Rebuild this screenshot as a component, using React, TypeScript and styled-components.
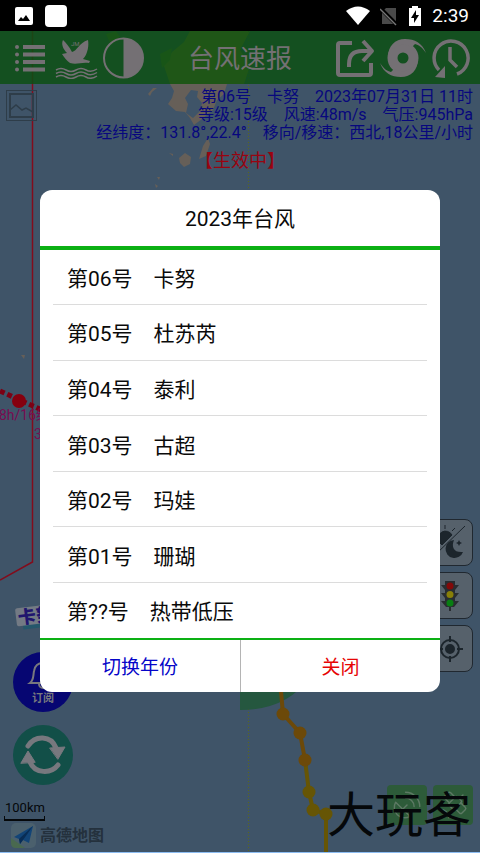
import React from 'react';
import styled, { createGlobalStyle } from 'styled-components';
import { Satellite, SatelliteDish } from 'lucide-react';

const GlobalStyle = createGlobalStyle`
  * { box-sizing: border-box; }
  body { margin: 0; background: #3f5468; font-family: Roboto, "Noto Sans CJK SC", sans-serif; }
  button { font: inherit; color: inherit; border: 0; padding: 0; background: none; cursor: pointer; }
  svg { display: block; }
`;

const Screen = styled.div`
  min-height: 100vh;
  display: flex;
  flex-direction: column;
`;

const StatusBar = styled.div`
  height: 31px;
  padding: 0 11px 0 15px;
  background: #000;
  color: #fff;
  display: flex;
  align-items: center;
  justify-content: space-between;
  font-size: 19px;
  font-weight: 400;
`;

const StatusGroup = styled.div<{ $gap: number }>`
  display: flex;
  align-items: center;
  gap: ${(p) => p.$gap}px;
`;

const AppTile = styled.div`
  width: 22px;
  height: 22px;
  border-radius: 4px;
  background: #fff;
`;

const Stage = styled.main`
  position: relative;
  flex: 1;
  display: flex;
  flex-direction: column;
  overflow: hidden;
  border-bottom: 1px solid #8dbdf2;
`;

const MapCanvas = styled.svg`
  position: absolute;
  inset: 0;
  width: 100%;
  height: 100%;
`;

const Header = styled.header`
  position: relative;
  height: 53px;
  padding: 0 9px;
  background: rgba(13, 79, 20, 0.86);
  color: #747074;
  display: grid;
  grid-template-columns: 1fr auto 1fr;
  align-items: center;
`;

const Title = styled.h1`
  margin: 0;
  padding-top: 2px;
  font-size: 26px;
  line-height: 36px;
  font-weight: 400;
`;

const Tools = styled.div<{ $end?: boolean }>`
  display: flex;
  align-items: center;
  gap: 5px;
  justify-content: ${(p) => (p.$end ? 'flex-end' : 'flex-start')};
`;

const Info = styled.section`
  position: relative;
  padding: 4px 7px 0 40px;
  text-align: right;
  color: #07077e;
  font-size: 16px;
  line-height: 18px;
  p { margin: 0; white-space: pre; }
`;

const Effective = styled.p`
  position: relative;
  margin: 6px 0 0;
  text-align: center;
  color: #980410;
  font-size: 18px;
  line-height: 26px;
`;

const Floating = styled.div<{ $side: 'left' | 'right'; $offset: number; $bottom: number; $gap: number; $row?: boolean }>`
  position: absolute;
  ${(p) => p.$side}: ${(p) => p.$offset}px;
  bottom: ${(p) => p.$bottom}px;
  display: flex;
  flex-direction: ${(p) => (p.$row ? 'row' : 'column')};
  gap: ${(p) => p.$gap}px;
`;

const PictureButton = styled.button`
  position: absolute;
  top: 59px;
  left: 6px;
`;

const RoundButton = styled.button<{ $tone: string }>`
  width: 60px;
  height: 60px;
  border-radius: 50%;
  background: ${(p) => p.$tone};
  color: #77787e;
  display: flex;
  flex-direction: column;
  align-items: center;
  justify-content: center;
  font-size: 11px;
  line-height: 18px;
  font-weight: 700;
`;

const MapButton = styled.button`
  width: 46px;
  height: 47px;
  border: 1px solid #202830;
  border-radius: 8px;
  background: #56616b;
  display: flex;
  align-items: center;
  justify-content: center;
`;

const LayerButton = styled.button`
  width: 40px;
  height: 40px;
  border-radius: 4px;
  background: #2d5b39;
  color: #5d7964;
  display: flex;
  align-items: center;
  justify-content: center;
`;

const Scale = styled.div`
  width: 41px;
  height: 22px;
  border: solid #05080a;
  border-width: 0 1px 2px;
  border-image: linear-gradient(to top, #05080a 4px, transparent 4px) 1;
  color: #05080a;
  font-size: 13px;
  line-height: 18px;
  white-space: nowrap;
`;

const Credit = styled.div`
  display: flex;
  align-items: center;
  gap: 4px;
  color: #24313d;
  font-size: 16px;
  line-height: 24px;
  font-weight: 700;
`;

const Watermark = styled.div`
  position: absolute;
  right: 9px;
  bottom: 12px;
  color: #05080a;
  font-size: 48px;
  line-height: 48px;
  font-weight: 400;
`;

const Overlay = styled.div`
  position: absolute;
  inset: 0;
  padding: 0 40px 2px;
  display: flex;
  align-items: center;
`;

const Dialog = styled.section`
  flex: 1;
  min-height: 502px;
  border-radius: 12px;
  overflow: hidden;
  background: #fff;
  color: #0a0a0a;
  display: flex;
  flex-direction: column;
`;

const DialogTitle = styled.h2`
  margin: 0;
  padding: 14px 0 12px;
  border-bottom: 4px solid #0cb014;
  text-align: center;
  font-size: 21px;
  line-height: 30px;
  font-weight: 400;
`;

const StormList = styled.ul`
  flex: 1;
  margin: 0;
  padding: 0 13px;
  list-style: none;
  display: flex;
  flex-direction: column;
`;

const StormItem = styled.li`
  flex: 1;
  display: flex;
  border-bottom: 1px solid #dcdcdc;
  &:last-child { border-bottom: 0; }
`;

const StormButton = styled.button`
  flex: 1;
  padding: 4px 14px 0;
  text-align: left;
  font-size: 21px;
  line-height: 30px;
`;

const Actions = styled.footer`
  display: grid;
  grid-template-columns: 1fr 1fr;
  border-top: 2px solid #0cb014;
`;

const ActionButton = styled.button<{ $tone: string }>`
  padding: 14px 0 10px;
  color: ${(p) => p.$tone};
  font-size: 19px;
  line-height: 28px;
  & + & { border-left: 1px solid #b4b4b4; }
`;

const storms = ['第06号　卡努', '第05号　杜苏芮', '第04号　泰利', '第03号　古超', '第02号　玛娃', '第01号　珊瑚', '第??号　热带低压'];

const track = [[283, 714], [300, 733], [305, 760], [309, 792], [313, 810], [326, 814]];

function StormMap() {
  return (
    <MapCanvas viewBox="0 31 480 821" preserveAspectRatio="xMidYMax slice" aria-hidden="true">
      <path fill="#3f5468" d="M0 31H480V852H0z" />
      <path fill="#8c8030" d="M190 31H250L240 50 250 66 244 84H170L164 66 172 52 184 42z" />
      <path fill="#5c7a30" d="M106 34l10-3 4 6-9 8zM160 54l12-6-2 12-8 8z" />
      <g fill="#665f58">
        <path d="M170 84H227L224 94 217 100 213 110 202 119 194 125 190 118 185 112 176 111 168 104 172 98 174 91z" />
        <path d="M148 94l5-6 4 0-5 4-2 4zM203 146l5-8 2 6-4 12-7 3zM179 158l6-5 6 4-1 7-6 3-4-4zM169 153l4 1 0 2zM155 184l3 2-2 2zM157 177l3 0-1 3zM21 355l4 0-1 4z" />
      </g>
      <path fill="#3f5468" d="M191 90l7 1-1 6 5 6-2 8-7 7-7-5 2-9-3-6z" />
      <path d="M248.500 31V852" stroke="#5c681c" strokeDasharray="1 2" />
      <path d="M32.500 31V562L0 580" fill="none" stroke="#820c1c" strokeWidth="1.500" />
      <path d="M0 391L44 411" stroke="#7c0014" strokeWidth="5" strokeDasharray="5 3" />
      <circle cx="19" cy="401" r="7" fill="#86000f" />
      <text x="-1" y="420" fontSize="14" fill="#780c50">8h/16级</text>
      <text x="34" y="439" fontSize="14" fill="#780c50">3</text>
      <path d="M240 600H330Q326 710 240 710z" fill="#25573f" />
      <path d="M280 680L283 714 300 733 305 760" fill="none" stroke="#6c4909" strokeWidth="4" />
      <path d="M305 760L309 792 313 810 326 814V852" fill="none" stroke="#665505" strokeWidth="4" />
      {track.map(([x, y], i) => <circle key={y} cx={x} cy={y} r="6.500" fill={i < 3 ? '#6c4909' : '#665505'} />)}
      <g transform="rotate(-7 36 616)">
        <path d="M22 619h40v9H22z" fill="#25576b" />
        <rect x="16" y="606" width="48" height="18" rx="2" fill="#737a84" />
        <text x="18" y="622" fontSize="18" fontWeight="900" fill="#20156e">卡努</text>
      </g>
    </MapCanvas>
  );
}

const ListIcon = () => (
  <svg width="38" height="42" viewBox="-6 0 38 42" stroke="currentColor" strokeWidth="4">
    <path d="M8 10H30M8 17.500H30M8 25H30M8 32.500H30" />
    <path d="M2 10h.01M2 17.500h.01M2 25h.01M2 32.500h.01" strokeLinecap="round" />
  </svg>
);

const BirdIcon = () => (
  <svg width="46" height="42" viewBox="0 0 46 42" fill="currentColor">
    <path d="M11 3C14 6 17 9 20 15 25 14 27 6 36 3 37 8 36 17 31 22L38 24 37 26C29 25 25 28 18 26 15 24 12 20 10 17L15 16C11 12 9 7 11 3z" />
    <path d="M4 33q5-3 10 0t10 0 10 0 11-1M4 36.500q5-3 10 0t10 0 10 0 11-1M4 40q5-3 10 0t10 0 10 0 11-1" fill="none" stroke="currentColor" strokeWidth="1.500" />
    <text x="19" y="9" fontSize="6">JM</text>
  </svg>
);

const ContrastIcon = () => (
  <svg width="42" height="42" viewBox="0 0 42 42">
    <circle cx="20.500" cy="21" r="19.500" fill="none" stroke="currentColor" strokeWidth="2" />
    <path d="M20.500 1.500a19.500 19.500 0 0 1 0 39z" fill="currentColor" />
  </svg>
);

const ShareIcon = () => (
  <svg width="40" height="42" viewBox="0 0 40 42" fill="none" stroke="currentColor" strokeWidth="4" strokeLinejoin="round">
    <path d="M17 6H5Q3 6 3 8V36Q3 38 5 38H34Q36 38 36 36V26" />
    <path d="M14 30V27Q14 14 27 14H36M28 4l9 10-9 10" />
  </svg>
);

const armPath = 'M8 22C8 11 15 4 25 4 35 4 42 8 46 18 42 12 39 10 35 9 34 10 33 11 32 12L23 9 12 14z';

const TyphoonIcon = () => (
  <svg width="46" height="46" viewBox="0 0 46 46" fill="currentColor">
    <circle cx="23" cy="23" r="10.500" fill="none" stroke="currentColor" strokeWidth="10" />
    <path d={armPath} />
    <path d={armPath} transform="rotate(180 23 23)" />
  </svg>
);

const HistoryIcon = () => (
  <svg width="40" height="42" viewBox="0 0 40 42" fill="none" stroke="currentColor" strokeWidth="3.500">
    <path d="M26 37A17 17 0 1 0 8 33" />
    <path d="M19 10V23L26 30" />
    <path d="M14 29V41L4 40z" fill="currentColor" stroke="none" />
  </svg>
);

const BellIcon = () => (
  <svg width="32" height="34" viewBox="0 0 32 34" fill="none" stroke="currentColor" strokeWidth="2">
    <path d="M3 27C7 24 6 20 7 15 8 9 12 7 16 7s8 2 9 8c1 5 0 9 4 12zM14 7a2 2 0 0 1 4 0M12 28a4 4 0 0 0 8 0" />
  </svg>
);

const RefreshIcon = () => (
  <svg width="46" height="46" viewBox="0 0 46 46" fill="none" stroke="currentColor" strokeWidth="5" strokeLinecap="round">
    <path d="M8 14C15 3 31 3 36 16M38 33C31 42 15 42 10 30" />
    <path d="M30 16L45 15 38 27zM1 31L8 19 15 30z" fill="currentColor" stroke="currentColor" strokeWidth="1" />
  </svg>
);

const DayNightIcon = () => (
  <svg width="36" height="38" viewBox="0 0 36 38" fill="#1c252c" stroke="#1c252c">
    <path d="M7 18a7 7 0 0 1 13-7L10 21zM3 31L33 2M13 1v4M4 4l3 3M23 4l-3 3" />
    <path d="M22 16a9 9 0 1 0 9 12c-9 1-12-5-9-12zM27 16l1 2 2 1-2 1-1 2-1-2-2-1 2-1z" stroke="none" />
  </svg>
);

const TrafficIcon = () => (
  <svg width="24" height="34" viewBox="0 0 24 34">
    <path fill="#292d31" d="M7 2h10v4h4l-4 5v3h4l-4 5v3h4l-5 6h-3v4h-2v-4H8l-5-6h4v-3l-4-5h4v-3L3 6h4z" />
    <circle cx="12" cy="7" r="3.500" fill="#820909" />
    <circle cx="12" cy="15.500" r="3.500" fill="#887f08" />
    <circle cx="12" cy="24" r="3.500" fill="#087e12" />
  </svg>
);

const LocateIcon = () => (
  <svg width="26" height="26" viewBox="0 0 26 26" fill="none" stroke="#1c252c" strokeWidth="2">
    <circle cx="13" cy="13" r="9" />
    <circle cx="13" cy="13" r="4" fill="#1c252c" />
    <path d="M13 0V6M13 20v6M0 13h6M20 13h6" />
  </svg>
);

const PictureIcon = () => (
  <svg width="31" height="31" viewBox="0 0 31 31" fill="none" stroke="#2e3d49">
    <rect x=".5" y=".5" width="30" height="30" />
    <rect x="4" y="4" width="23" height="23" strokeWidth="2" />
    <path d="M4 20L10 15 16 20 20 18 27 22" strokeWidth="1.500" />
  </svg>
);

const PlaneIcon = () => (
  <svg width="25" height="25" viewBox="0 0 25 25">
    <rect width="25" height="25" rx="5" fill="#4b606d" />
    <path d="M0 15L14 25H5Q0 25 0 20z" fill="#49694f" />
    <path d="M3 14L22 3 18 20 12 17 9 21 8 16z" fill="#124477" />
    <path d="M8 16L22 3 12 17 9 21z" fill="#092d55" />
  </svg>
);

export default function App() {
  return (
    <Screen>
      <GlobalStyle />
      <StatusBar>
        <StatusGroup $gap={12}>
          <svg width="18" height="18" viewBox="0 0 18 18">
            <rect width="18" height="18" rx="2" fill="#fff" />
            <path d="M3 14L6 10 8 12 11 8 15 14z" fill="#000" />
          </svg>
          <AppTile />
        </StatusGroup>
        <StatusGroup $gap={10}>
          <svg width="24" height="20" viewBox="0 0 24 20"><path d="M0 5Q12-4 24 5L12 19z" fill="#fff" /></svg>
          <svg width="18" height="20" viewBox="0 0 18 20">
            <path d="M6 2H16V18H2V6z" fill="#4a4a4a" />
            <path d="M0 2L17 19" stroke="#000" strokeWidth="4" />
            <path d="M0 3L16 19" stroke="#777" strokeWidth="1.500" />
          </svg>
          <svg width="14" height="20" viewBox="0 0 14 20">
            <path d="M4 0h6v2h3v18H1V2h3z" fill="#fff" />
            <path d="M8 4L3 12h3v5l5-8H8z" fill="#000" />
          </svg>
          <span>2:39</span>
        </StatusGroup>
      </StatusBar>
      <Stage>
        <StormMap />
        <Header>
          <Tools>
            <button aria-label="菜单"><ListIcon /></button>
            <button aria-label="海洋"><BirdIcon /></button>
            <button aria-label="对比度"><ContrastIcon /></button>
          </Tools>
          <Title>台风速报</Title>
          <Tools $end>
            <button aria-label="分享"><ShareIcon /></button>
            <button aria-label="台风"><TyphoonIcon /></button>
            <button aria-label="历史"><HistoryIcon /></button>
          </Tools>
        </Header>
        <Info>
          <p>第06号　卡努　2023年07月31日 11时</p>
          <p>等级:15级　风速:48m/s　气压:945hPa</p>
          <p>经纬度：131.8°,22.4°　移向/移速：西北,18公里/小时</p>
        </Info>
        <Effective>【生效中】</Effective>
        <PictureButton aria-label="图片"><PictureIcon /></PictureButton>

        <Floating $side="right" $offset={7} $bottom={180} $gap={6}>
          <MapButton aria-label="昼夜"><DayNightIcon /></MapButton>
          <MapButton aria-label="路况"><TrafficIcon /></MapButton>
          <MapButton aria-label="定位"><LocateIcon /></MapButton>
        </Floating>
        <Floating $side="left" $offset={13} $bottom={67} $gap={13}>
          <RoundButton $tone="#060672"><BellIcon />订阅</RoundButton>
          <RoundButton $tone="#124f48" aria-label="刷新"><RefreshIcon /></RoundButton>
        </Floating>
        <Floating $side="left" $offset={4} $bottom={31} $gap={0}>
          <Scale>100km</Scale>
        </Floating>
        <Floating $side="left" $offset={11} $bottom={4} $gap={0}>
          <Credit><PlaneIcon />高德地图</Credit>
        </Floating>
        <Floating $side="right" $offset={7} $bottom={27} $gap={6} $row>
          <LayerButton aria-label="雷达"><SatelliteDish size={34} strokeWidth={1} /></LayerButton>
          <LayerButton aria-label="卫星"><Satellite size={34} strokeWidth={1} /></LayerButton>
        </Floating>
        <Watermark>大玩客</Watermark>

        <Overlay>
          <Dialog role="dialog" aria-labelledby="storm-title">
            <DialogTitle id="storm-title">2023年台风</DialogTitle>
            <StormList>
              {storms.map((name) => (
                <StormItem key={name}><StormButton>{name}</StormButton></StormItem>
              ))}
            </StormList>
            <Actions>
              <ActionButton $tone="#0505c8">切换年份</ActionButton>
              <ActionButton $tone="#e60505">关闭</ActionButton>
            </Actions>
          </Dialog>
        </Overlay>
      </Stage>
    </Screen>
  );
}
